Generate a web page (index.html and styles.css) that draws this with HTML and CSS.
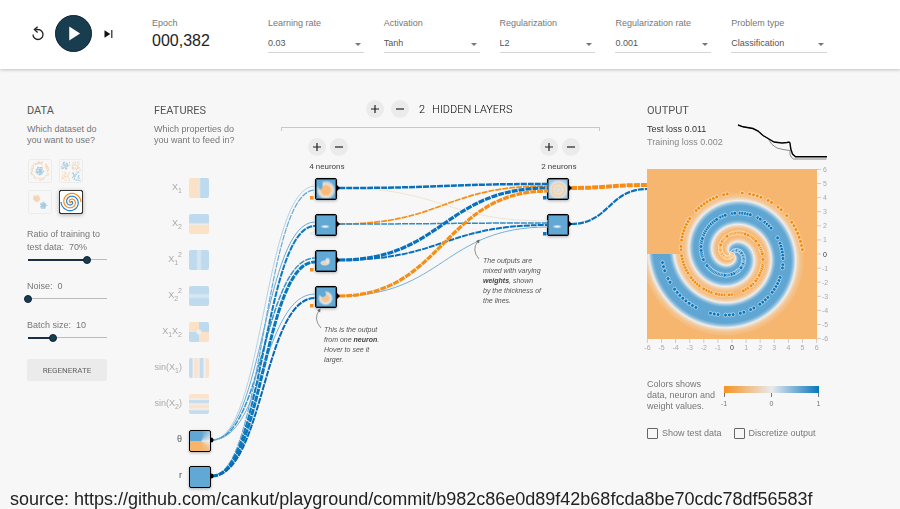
FILE: index.html
```html
<!DOCTYPE html>
<html lang="en">
<head>
<meta charset="utf-8">
<title>Neural network playground</title>
<link rel="stylesheet" href="styles.css">
</head>
<body>
<header class="top">
  <div class="top-inner">
    <div class="controls">
      <button class="icon-btn" aria-label="Reset"><svg width="14" height="16" viewBox="0 0 14 16"><path d="M2 8.5a5 5 0 1 0 5-5H4.2" fill="none" stroke="#222" stroke-width="1.3"/><path d="M6.6.8 3.4 3.6l3.2 2.8" fill="none" stroke="#222" stroke-width="1.3"/></svg></button>
      <button class="play" aria-label="Play"><svg width="37" height="37" viewBox="0 0 37 37"><path d="M14 11v15l11.500-7.500z" fill="#fff"/></svg></button>
      <button class="icon-btn" aria-label="Step"><svg width="12" height="10" viewBox="0 0 12 10"><path d="M2.500 1.200v7.600L8.300 5z" fill="#111"/><path d="M9.800 1v8" stroke="#222" stroke-width="1.2"/></svg></button>
    </div>
    <div class="epoch"><span class="label">Epoch</span><output>000,382</output></div>
    <div class="selects">
      <label class="field"><span class="label">Learning rate</span><select><option>0.03</option></select></label>
      <label class="field"><span class="label">Activation</span><select><option>Tanh</option></select></label>
      <label class="field"><span class="label">Regularization</span><select><option>L2</option></select></label>
      <label class="field"><span class="label">Regularization rate</span><select><option>0.001</option></select></label>
      <label class="field"><span class="label">Problem type</span><select><option>Classification</option></select></label>
    </div>
  </div>
</header>

<main class="main">
  <section class="data">
    <h2>Data</h2>
    <p class="desc">Which dataset do<br>you want to use?</p>
    <div class="datasets">
      <button class="dataset" aria-label="Circle"><canvas width="22" height="22" data-kind="circle"></canvas></button>
      <button class="dataset" aria-label="Exclusive or"><canvas width="22" height="22" data-kind="xor"></canvas></button>
      <button class="dataset" aria-label="Gaussian"><canvas width="22" height="22" data-kind="gauss"></canvas></button>
      <button class="dataset selected" aria-label="Spiral"><canvas width="22" height="22" data-kind="spiral"></canvas></button>
    </div>
    <div class="slider"><label for="ratio">Ratio of training to<br>test data:&nbsp; 70%</label><input class="r70" id="ratio" type="range" min="10" max="90" value="70"></div>
    <div class="slider"><label for="noise">Noise:&nbsp; 0</label><input class="r0" id="noise" type="range" min="0" max="50" value="0"></div>
    <div class="slider"><label for="batch">Batch size:&nbsp; 10</label><input class="r10" id="batch" type="range" min="1" max="30" value="10"></div>
    <button class="regenerate">Regenerate</button>
  </section>

  <section class="network">
    <div class="features">
      <h2>Features</h2>
      <p class="desc">Which properties do<br>you want to feed in?</p>
      <ul class="feature-list">
        <li><span>X<sub>1</sub></span><i class="cell f-x1"></i></li>
        <li><span>X<sub>2</sub></span><i class="cell f-x2"></i></li>
        <li><span>X<sub>1</sub><sup>2</sup></span><i class="cell f-x1sq"></i></li>
        <li><span>X<sub>2</sub><sup>2</sup></span><i class="cell f-x2sq"></i></li>
        <li><span>X<sub>1</sub>X<sub>2</sub></span><i class="cell f-x1x2"></i></li>
        <li><span>sin(X<sub>1</sub>)</span><i class="cell f-sin1"></i></li>
        <li><span>sin(X<sub>2</sub>)</span><i class="cell f-sin2"></i></li>
        <li class="on"><span>θ</span><i class="cell f-theta"></i></li>
        <li class="on"><span>r</span><i class="cell f-r"></i></li>
      </ul>
    </div>
    <div class="hidden-layers">
      <div class="layers-head">
        <button class="round" aria-label="Add layer"><svg width="18" height="18" viewBox="0 0 18 18"><path d="M5 9h8M9 5v8"/></svg></button>
        <button class="round" aria-label="Remove layer"><svg width="18" height="18" viewBox="0 0 18 18"><path d="M5 9h8"/></svg></button>
        <span class="count">2</span><h2>Hidden layers</h2>
      </div>
      <div class="bracket"></div>
      <div class="layers">
        <div class="layer">
          <div class="pair">
            <button class="round" aria-label="Add neuron"><svg width="18" height="18" viewBox="0 0 18 18"><path d="M5 9h8M9 5v8"/></svg></button>
            <button class="round" aria-label="Remove neuron"><svg width="18" height="18" viewBox="0 0 18 18"><path d="M5 9h8"/></svg></button>
          </div>
          <p>4 neurons</p>
          <i class="neuron n1"></i><i class="neuron n2"></i><i class="neuron n3"></i><i class="neuron n4"></i>
        </div>
        <div class="layer">
          <div class="pair">
            <button class="round" aria-label="Add neuron"><svg width="18" height="18" viewBox="0 0 18 18"><path d="M5 9h8M9 5v8"/></svg></button>
            <button class="round" aria-label="Remove neuron"><svg width="18" height="18" viewBox="0 0 18 18"><path d="M5 9h8"/></svg></button>
          </div>
          <p>2 neurons</p>
          <i class="neuron n5"></i><i class="neuron n6"></i>
        </div>
      </div>
    </div>
    <svg class="links" width="493" height="385" viewBox="154 104 493 385" aria-hidden="true">
      <g id="weights" fill="none" stroke-dasharray="6 1"></g>
      <path d="M211 437.500a2.500 2.500 0 0 1 0 5zM211 473.500a2.500 2.500 0 0 1 0 5zM337 185l3 3-3 3zM337 221l3 3-3 3zM337 257l3 3-3 3zM337 293l3 3-3 3zM569 185l3 3-3 3zM569 221l3 3-3 3z"/>
      <g fill="#f59322"><path d="M310 196h3.500v3.500h-3.500zM310 268h3.500v3.500h-3.500zM310 304h3.500v3.500h-3.500z"/></g>
      <path d="M310 232h3v3h-3z" fill="#e8eaeb"/>
      <path d="M543 196h3.500v3.500h-3.500zM543 232h3.500v3.500h-3.500z" fill="#0877bd"/>
      <g fill="none" stroke="#777" stroke-width=".8">
        <path d="M321 328Q313 319 319 310.500M479 259Q471 250 478 241"/>
      </g>
      <path d="M320.500 308.500l-.3 4-3-2.200zM479.500 239.500l-.5 4-3-2.500z" fill="#666"/>
    </svg>
    <p class="note note-neuron">This is the output<br>from one <b>neuron</b>.<br>Hover to see it<br>larger.</p>
    <p class="note note-weight">The outputs are<br>mixed with varying<br><b>weights</b>, shown<br>by the thickness of<br>the lines.</p>
  </section>

  <section class="output">
    <h2>Output</h2>
    <div class="metrics">
      <div class="losses"><p class="test">Test loss 0.011</p><p>Training loss 0.002</p></div>
      <svg width="92" height="38" viewBox="737 123 92 38" aria-hidden="true" fill="none">
        <path d="M738 125l6 2 9 1.500 6 3 4 4 5 3 4 6 5 3.500 6 1.500 7 1v4l1.500 3 2 1.500h33" stroke="#888"/>
        <path d="M738 125l5 1.800 10 1.700 5 2.500 5 4.500 6 3.500 5 3 8 1 5 -.5 2-.5 1 1 .8 6 1.700 5 3 2.800h31.500" stroke="#000" stroke-width="1.400"/>
      </svg>
    </div>
    <div class="plot">
      <canvas id="heatmap" width="170" height="170"></canvas>
      <svg id="axis-y" class="axis" width="16" height="170" viewBox="0 0 16 170"></svg>
      <svg id="axis-x" class="axis" width="170" height="14" viewBox="0 0 170 14"></svg>
    </div>
    <div class="legend">
      <p>Colors shows data, neuron and weight values.</p>
      <svg width="104" height="26" viewBox="720 384 104 26">
        <defs><linearGradient id="scale"><stop offset="0" stop-color="#f59322"/><stop offset=".5" stop-color="#e8eaeb"/><stop offset="1" stop-color="#0877bd"/></linearGradient></defs>
        <rect x="724" y="386" width="95" height="7" fill="url(#scale)"/>
        <path d="M724.500 393v4M771.500 393v4M818.500 393v4" stroke="#777"/>
        <g class="ticks"><text x="724" y="406">-1</text><text x="771.500" y="406">0</text><text x="818.500" y="406">1</text></g>
      </svg>
    </div>
    <div class="checks">
      <label><input type="checkbox">Show test data</label>
      <label><input type="checkbox">Discretize output</label>
    </div>
  </section>
</main>
<p class="source">source: https://github.com/cankut/playground/commit/b982c86e0d89f42b68fcda8be70cdc78df56583f</p>
<script src="script.js"></script>
</body>
</html>
```
FILE: styles.css
```css
* { box-sizing: border-box; }
body {
  margin: 0;
  background: #f7f7f7;
  color: #777;
  font: 9px/11px "Liberation Sans", Roboto, sans-serif;
}
p, h2, ul { margin: 0; padding: 0; }
button, select, input { font: inherit; color: inherit; margin: 0; padding: 0; border: 0; background: none; }
svg, canvas { display: block; }
h2 { font: 400 11px/13px Roboto, sans-serif; color: #555; text-transform: uppercase; }

/* Top bar */
.top { background: #fff; box-shadow: 0 1px 3px rgba(0, 0, 0, .22); }
.top-inner {
  display: flex;
  max-width: 900px;
  height: 69px;
  margin: 0 auto;
  padding: 15px 73px 0 31px;
}
.controls { display: flex; align-items: center; gap: 10px; width: 121px; height: 37px; flex: none; }
.icon-btn { display: flex; flex: none; }
.play { width: 37px; height: 37px; border-radius: 50%; background: #183d4e; flex: none; border: 1px solid #0e2038; display: flex; align-items: center; justify-content: center; }
.epoch { width: 116px; padding-top: 3px; flex: none; }
.epoch output { display: block; margin-top: 3px; font: 16px/18px "Liberation Sans", sans-serif; color: #222; }
.label { display: block; color: #777; }
.selects { flex: 1; display: grid; grid-template-columns: repeat(5, 1fr); gap: 20px; padding-top: 3px; }
.field { position: relative; }
.field select {
  display: block;
  width: 100%;
  height: 18px;
  margin-top: 6px;
  appearance: none;
  border-bottom: 1px solid #d5d5d5;
  border-radius: 0;
  color: #555;
}
.field::after {
  content: "";
  position: absolute;
  right: 3px;
  top: 25px;
  border: 3px solid transparent;
  border-top-color: #777;
  border-bottom: 0;
}

/* Page columns */
.main {
  display: grid;
  grid-template-columns: 127px 493px 1fr;
  max-width: 900px;
  margin: 0 auto;
  padding: 35px 34px 0 27px;
}
.desc { margin-top: 7px; color: #777; }

/* Data column */
.data { width: 80px; }
.desc, .slider label { white-space: nowrap; }
.datasets { display: grid; grid-template-columns: 24px 24px; gap: 7px; margin: 13px 0 14px 1px; }
.dataset { width: 24px; height: 24px; border: 1px solid #ddd; border-radius: 2px; opacity: .4; }
.dataset.selected { border: 1px solid #000; outline: 1px solid #333; outline-offset: -1px; opacity: 1; background: #fff; box-shadow: 0 1px 4px rgba(0, 0, 0, .3); }
.slider { margin-bottom: 15px; }
.slider label { display: block; line-height: 13px; color: #777; }
.slider input {
  --fill: 0px;
  display: block;
  width: 87px;
  height: 10px;
  margin: 1px 0 0 -3px;
  appearance: none;
  background:
    linear-gradient(#1a2e44, #1a2e44) 4px 4px / var(--fill) 2px no-repeat,
    linear-gradient(#bbb, #bbb) 4px 4px / calc(100% - 8px) 1px no-repeat;
}
.slider input::-webkit-slider-thumb { appearance: none; width: 8px; height: 8px; border-radius: 50%; background: #183d4e; border: 1px solid #0e2038; }
.slider .r70 { --fill: 59px; }
.slider .r10 { --fill: 24px; }
.regenerate { width: 80px; height: 22px; margin-top: 1px; border-radius: 2px; background: #ebebeb; color: #666; font: 8px/11px Roboto, sans-serif; text-transform: uppercase; }

/* Network */
.network { position: relative; display: flex; }
.features { width: 126px; }
.feature-list { list-style: none; display: grid; gap: 14px; margin-top: 32px; }
.feature-list li { display: flex; gap: 7px; height: 22px; color: #aaa; }
.feature-list .on { color: #555; }
.feature-list span { width: 28px; line-height: 18px; display: flex; justify-content: flex-end; white-space: nowrap; }
.feature-list sub, .feature-list sup { font-size: 7px; line-height: 18px; vertical-align: baseline; }
.feature-list sub { padding-top: 4px; }
.feature-list sup { margin-top: -4px; }
.cell { width: 20px; height: 20px; border-radius: 2px; }
.on .cell { width: 22px; height: 22px; border: 1px solid #000; box-shadow: 0 1px 3px rgba(0, 0, 0, .3); }
.f-x1 { background: linear-gradient(90deg, #fbe1c6 44%, #e9eaea 50%, #bddaee 60%); }
.f-x2 { background: linear-gradient(#bddaee 40%, #ececea 52%, #fbe1c6 60%); }
.f-x1sq { background: linear-gradient(90deg, #bddaee 35%, #d7e7ef 45%, #d7e7ef 55%, #bddaee 65%); }
.f-x2sq { background: linear-gradient(#bddaee 35%, #d7e7ef 45%, #d7e7ef 55%, #bddaee 65%); }
.f-x1x2 { background: radial-gradient(circle, #f0f0ee 10%, transparent 25%), conic-gradient(#bddaee 25%, #fbe1c6 0 50%, #bddaee 0 75%, #fbe1c6 0); }
.f-sin1 { background: linear-gradient(90deg, #c4ddee 14%, #f3f0ec 22%, #fbe3cb 30% 42%, #f0f0ee 50%, #c4ddee 56% 68%, #f4f2ef 78%, #fbe3cb 85%); }
.f-sin2 { background: linear-gradient(#fbe3cb 18%, #f4f2ef 26%, #c4ddee 33% 42%, #f0f0ee 50%, #fbe3cb 58% 68%, #f4f2ef 76%, #c4ddee 84%); }
.f-theta { background: conic-gradient(from 90deg at 55% 50%, #e8eaeb, #f3bd80 14%, #f7b56c 25% 50%, #61a7d4 0 77%, #e8eaeb); }
.f-r { background: #62a8d5; }

.hidden-layers { width: 320px; }
.layers-head { display: flex; align-items: center; height: 18px; margin-top: -4px; padding-left: 86px; }
.layers-head h2 { font-weight: 300; color: #000; }
.round { width: 18px; height: 18px; border-radius: 50%; background: #ebebeb; flex: none; }
.round path { stroke: #222; stroke-width: 1.2; }
.layers-head .round { margin-right: 7px; }
.count { margin: 0 7px 0 3px; font: 300 11px/13px Roboto, sans-serif; color: #000; }
.bracket { height: 4px; margin: 9px 0 7px 1px; border: 1px solid #c8c8c8; border-bottom: 0; }
.layers { display: flex; justify-content: space-between; padding: 0 10px 0 14px; }
.layer { display: flex; flex-direction: column; align-items: center; width: 64px; }
.pair { display: flex; gap: 4px; margin-left: 3px; }
.layer p { margin: 6px 0; padding-left: 2px; font: 8px/10px Roboto, sans-serif; color: #444; }
.neuron { width: 22px; height: 22px; margin-bottom: 14px; border: 1px solid #000; border-radius: 2px; box-shadow: 0 1px 3px rgba(0, 0, 0, .3); outline: 1px solid rgba(0, 0, 0, .4); outline-offset: -2px; background-color: #62a8d5; }
.n1 { background-image: radial-gradient(3px 6px at 22% 30%, #62a8d5 50%, transparent), radial-gradient(circle at 50% 56%, #f8bb7c 28%, #f7ddc4 42%, #b5d1e2 54%, transparent 66%); }
.n2 { background-image: radial-gradient(5px 2px at 46% 58%, #e8eaeb 30%, transparent); }
.n3 { background-image: radial-gradient(3px 4px at 58% 50%, #dfe4e6 40%, transparent), radial-gradient(5px 3px at 44% 60%, #f3d2ab 40%, #cadce6 70%, transparent); }
.n4 { background-image: radial-gradient(4px 4px at 34% 34%, #62a8d5 60%, transparent), radial-gradient(circle at 48% 56%, #f8c48e 18%, #dfe4e6 36%, transparent 50%); }
.n5 { background-image: radial-gradient(circle at 52% 54%, #dbe3e8 8%, #f0d4b3 20%, #e4e4e2 28%, #f6cf9f 42%, #dde4e8 52%, #a9cde4 66%, #7fb6da); }
.n6 { background-image: radial-gradient(5px 2px at 46% 58%, #e8eaeb 30%, transparent); }
.links { position: absolute; left: 0; top: 0; pointer-events: none; }
.note { position: absolute; font: italic 7px/10px "Liberation Sans", sans-serif; color: #555; white-space: nowrap; }
.note b { color: #444; }
.note-neuron { left: 170px; top: 221px; }
.note-weight { left: 329px; top: 152px; }

/* Output column */
.metrics { display: flex; align-items: flex-start; height: 46px; margin-top: 6px; }
.losses { width: 90px; line-height: 13px; color: #888; white-space: nowrap; }
.losses .test { color: #333; }
.plot { display: grid; grid-template-columns: 170px 16px; }
.axis { overflow: visible; }
.axis text, .ticks text { font-size: 7px; fill: #aaa; text-anchor: middle; }
.ticks text { fill: #777; }
.axis .zero { fill: #333; }
.axis path { stroke: #ccc; }
.legend { display: flex; align-items: flex-start; margin-top: 26px; }
.legend p { width: 73px; color: #777; }
.legend svg { margin-top: 5px; }
.checks { display: flex; gap: 12px; margin-top: 15px; line-height: 12px; color: #777; white-space: nowrap; }
.checks label { display: flex; align-items: center; gap: 4px; }
.checks input { appearance: none; width: 11px; height: 11px; border: 1px solid #666; border-radius: 1px; }

.source { padding-left: 10px; font: 18px/22px "Liberation Sans", sans-serif; color: #222; white-space: nowrap; }
```
FILE: script.js
```js
const ORANGE = [246, 182, 112], MID = [238, 238, 238], BLUE = [96, 166, 211];
const TURN = 3.5 * Math.PI;
let seed = 11;
function rnd() { seed = (seed * 16807) % 2147483647; return seed / 2147483647; }

/* Weights: x1, y1, x2, y2, width, colour, solid */
const weights = [
  [212, 440, 315, 186, 1, '#b4d2e6', 1], [212, 440, 315, 222, 1, '#6aaad4', 1],
  [212, 440, 315, 258, 1.5, '#3b91c9'], [212, 440, 315, 294, 1, '#74b0d6', 1],
  [212, 476, 315, 190, 1.2, '#6aaad4'], [212, 476, 315, 226, 2, '#0f79be'],
  [212, 476, 315, 262, 3, '#0877bd'], [212, 476, 315, 298, 2, '#0868b8'],
  [339, 188, 548, 221, 1, '#eee3d6', 1], [339, 296, 548, 227, 1, '#74b0d6', 1],
  [339, 188, 548, 184, 2.5, '#0870bd'], [339, 224, 548, 186, 1.7, '#f58d16'],
  [339, 224, 548, 223, 1.5, '#2f8bc6'], [339, 260, 548, 225, 2, '#0870bd'],
  [339, 260, 548, 188, 3.2, '#0870bd'], [339, 296, 548, 191, 3.2, '#f58d16'],
  [571, 188, 647, 185, 4, '#f58d16'], [571, 224, 647, 189, 2.2, '#0870bd']
];
document.getElementById('weights').innerHTML = weights.map(([a, b, c, d, w, col, solid]) => {
  const m = (a + c) / 2;
  return `<path d="M${a} ${b}C${m} ${b} ${m} ${d} ${c} ${d}" stroke="${col}" stroke-width="${w}"${solid ? ' stroke-dasharray="none"' : ''}/>`;
}).join('');

/* Decision surface of the spiral classifier */
const ctx = document.getElementById('heatmap').getContext('2d');
const img = ctx.createImageData(170, 170);
for (let py = 0; py < 170; py++) for (let px = 0; px < 170; px++) {
  const x = (px + .5) / 170 * 12 - 6, y = 6 - (py + .5) / 170 * 12;
  const r = Math.hypot(x, y), t = r * TURN / 5;
  let a = Math.atan2(x, y);
  if (a < -Math.PI / 2) a += 2 * Math.PI;
  let v = -1;
  for (const k of [0, 1]) {
    const d = t - a - 2 * Math.PI * k;
    if (Math.abs(d) < Math.PI) v = Math.max(v, Math.cos(d) + Math.min(.4, r * .1));
  }
  v = Math.max(-1, Math.min(1, Math.tanh(v * 1.5) / .82));
  const c = v < 0 ? ORANGE : BLUE, s = Math.abs(v), o = (py * 170 + px) * 4;
  for (let i = 0; i < 3; i++) img.data[o + i] = MID[i] + (c[i] - MID[i]) * s;
  img.data[o + 3] = 255;
}
ctx.putImageData(img, 0, 0);
for (const [shift, col] of [[0, '#0877bd'], [Math.PI, '#f58a0c']]) {
  for (let i = 0; i < 180; i++) {
    if (rnd() < .3) continue;
    const r = i / 180 * 5, t = i / 180 * TURN + shift;
    ctx.beginPath();
    ctx.arc(85 + r * Math.sin(t) * 14.17, 85 - r * Math.cos(t) * 14.17, 1.9, 0, 7);
    ctx.fillStyle = col; ctx.fill();
    ctx.strokeStyle = 'rgba(255,255,255,.65)'; ctx.lineWidth = .8; ctx.stroke();
  }
}

/* Axes, -6 to 6 */
let ax = '', ay = '';
for (let i = -6; i <= 6; i++) {
  const p = 85 + i * 14.1, q = 85 - i * 14.1, z = i ? '' : ' class="zero"';
  ax += `<path d="M${p} 0v4"/><text${z} x="${p}" y="11">${i}</text>`;
  ay += `<path d="M0 ${q}h4"/><text${z} x="8" y="${q + 2.5}">${i}</text>`;
}
document.getElementById('axis-x').innerHTML = ax;
document.getElementById('axis-y').innerHTML = ay;

/* Dataset thumbnails */
document.querySelectorAll('.dataset canvas').forEach(cv => {
  const g = cv.getContext('2d'), kind = cv.dataset.kind;
  const dot = (x, y, blue, s = 1) => { g.fillStyle = blue ? '#2f8bc6' : '#f5a04a'; g.fillRect(x, y, s, s); };
  if (kind === 'spiral') {
    for (const [shift, col] of [[0, '#2b7fc0'], [Math.PI, '#f58a20']]) {
      g.beginPath();
      for (let i = 0; i <= 90; i++) {
        const r = i / 90 * 10, t = i / 90 * TURN + shift;
        g.lineTo(11 + r * Math.sin(t), 11 - r * Math.cos(t));
      }
      g.strokeStyle = col; g.lineWidth = 1.2; g.stroke();
    }
    return;
  }
  for (let i = 0; i < 180; i++) {
    const a = rnd() * 6.28, b = rnd(), blue = i % 2;
    if (kind === 'circle') { const r = blue ? b * 4.5 : 7 + b * 2.5; dot(10.5 + r * Math.cos(a), 10.5 + r * Math.sin(a), blue); }
    if (kind === 'gauss') { const r = b * 3.5, c = blue ? 14 : 7; dot(c + r * Math.cos(a), c + r * Math.sin(a), blue); }
    if (kind === 'xor') {
      const x = 1 + rnd() * 19, y = 1 + b * 19;
      if (Math.abs(x - 10.5) > 1 && Math.abs(y - 10.5) > 1) dot(x, y, (x < 10.5) === (y < 10.5));
    }
  }
});
```
